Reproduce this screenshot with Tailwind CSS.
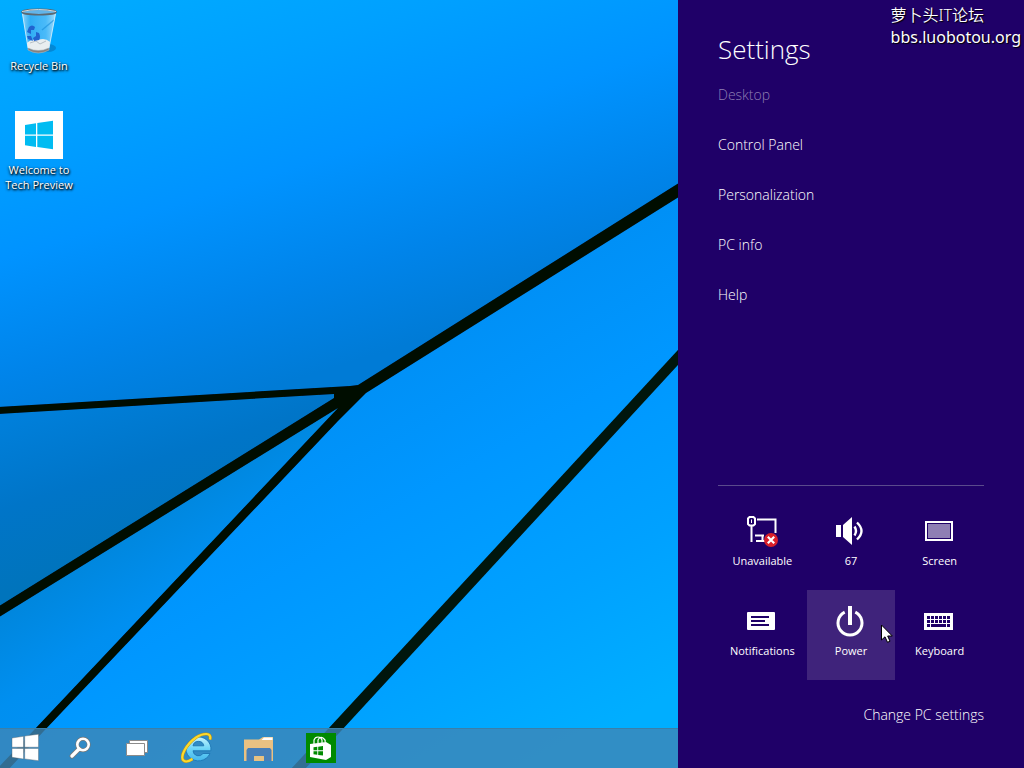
<!DOCTYPE html>
<html lang="en">
<head>
<meta charset="utf-8">
<meta name="viewport" content="width=device-width, initial-scale=1">
<title>Settings</title>
<script src="https://cdn.jsdelivr.net/npm/@tailwindcss/browser@4"></script>
</head>
<body class="relative flex h-screen overflow-hidden bg-[#1f0068] font-['Open_Sans','Noto_Sans','Noto_Sans_CJK_SC',sans-serif] text-white">

<main class="relative isolate flex min-w-0 flex-1 flex-col overflow-hidden">
  <!-- Wallpaper -->
  <svg class="absolute inset-0 -z-10 h-full w-full" viewBox="0 0 678 768" preserveAspectRatio="xMinYMin slice" aria-hidden="true">
    <defs>
      <linearGradient id="sky" gradientUnits="userSpaceOnUse" x1="0" y1="0" x2="135" y2="430">
        <stop offset="0" stop-color="#00adff"/><stop offset=".3" stop-color="#00a0ff"/><stop offset=".55" stop-color="#0093ff"/><stop offset=".8" stop-color="#0084ea"/><stop offset="1" stop-color="#007bd6"/>
      </linearGradient>
      <linearGradient id="wedge" gradientUnits="userSpaceOnUse" x1="60" y1="405" x2="110" y2="560">
        <stop offset="0" stop-color="#007fda"/><stop offset=".5" stop-color="#0075c8"/><stop offset="1" stop-color="#0074bc"/>
      </linearGradient>
      <linearGradient id="sliver" gradientUnits="userSpaceOnUse" x1="60" y1="570" x2="150" y2="700">
        <stop offset="0" stop-color="#0086dc"/><stop offset=".5" stop-color="#008ff0"/><stop offset="1" stop-color="#0092f6"/>
      </linearGradient>
      <linearGradient id="field" gradientUnits="userSpaceOnUse" x1="330" y1="400" x2="540" y2="768">
        <stop offset="0" stop-color="#0090f6"/><stop offset=".3" stop-color="#0097ff"/><stop offset=".65" stop-color="#00a1ff"/><stop offset="1" stop-color="#00aeff"/>
      </linearGradient>
      <filter id="edge" x="-5%" y="-5%" width="110%" height="110%"><feGaussianBlur stdDeviation=".6"/></filter>
    </defs>
    <rect width="678" height="768" fill="url(#field)"/>
    <path d="M0 0H678V190L355 390L0 411Z" fill="url(#sky)"/>
    <path d="M0 411L355 390L0 612Z" fill="url(#wedge)"/>
    <path d="M0 612L355 390L5 768H0Z" fill="url(#sliver)"/>
    <g filter="url(#edge)">
      <path d="M-4 407L350 386L358 385L690 176V190L366 393L338 421L43 732L8 770H-4L34 730L338 408L-4 619V608L334 398L334 394L-4 414Z" fill="#010806"/>
      <path d="M690 337L328 729L290 770H304L341 731L690 352Z" fill="#03140c"/>
    </g>
  </svg>

  <ul class="flex w-[78px] flex-1 flex-col gap-[38px] pt-[7px] text-center text-[11px] leading-[15px] font-[450] [text-shadow:1px_1px_2px_#000,0_1px_3px_#000]">
    <li>
      <a href="#recycle" class="flex flex-col items-center gap-[3px]">
        <svg class="size-12" viewBox="0 0 48 48" aria-hidden="true">
          <defs><linearGradient id="glass"><stop offset="0" stop-color="#b9e2f8" stop-opacity=".8"/><stop offset=".25" stop-color="#4ab0f0" stop-opacity=".65"/><stop offset=".7" stop-color="#7cc6f5" stop-opacity=".6"/><stop offset="1" stop-color="#c4e8fa" stop-opacity=".85"/></linearGradient></defs>
          <ellipse cx="33" cy="41" rx="8" ry="4" fill="#075b98" opacity=".4"/>
          <path d="M7 5L13 41Q23 48 34 41L41 5Z" fill="url(#glass)"/>
          <path d="M12 36Q17 31 23 33Q30 30 35 35L34 41Q23 46 13 41Z" fill="#e9eef0"/>
          <path d="M15 36L21 34L25 37L31 34" fill="none" stroke="#b7c0c6" stroke-width="1"/>
          <path d="M13 41Q23 46 34 41V43Q23 49 13 43Z" fill="#84817f" stroke="#b8b6b4" stroke-width=".6"/>
          <path d="M14 20Q17 17 20 20L19 23L16 23L16 27L12 25ZM21 25L24 26Q26 30 24 33L19 34L18 31L21 29ZM12 29L16 29L18 34L13 32Z" fill="#2163cf"/>
          <path d="M27 23L39 13" stroke="#178ddb" stroke-width="1.5" opacity=".6"/>
          <ellipse cx="24" cy="5" rx="17" ry="2.700" fill="#62b4e8" stroke="#5d6972" stroke-width="1.600"/>
          <path d="M7 4.500Q23 .5 41 4.500" fill="none" stroke="#d4dadd"/>
          <path d="M7.500 7L13 41M40.500 7L34 41" stroke="#dff3fc" stroke-width=".8"/>
        </svg>
        <span>Recycle Bin</span>
      </a>
    </li>
    <li>
      <a href="#welcome" class="flex flex-col items-center gap-[3px]">
        <svg class="size-12 bg-white" viewBox="0 0 48 48" fill="#00bcf2" aria-hidden="true"><path d="M10 14L21 12.300V23.500H10ZM22.300 12.100L38 9.800V23.500H22.300ZM10 24.800H21V36L10 34.300ZM22.300 24.800H38V38.300L22.300 36.100Z"/></svg>
        <span>Welcome to<br>Tech Preview</span>
      </a>
    </li>
  </ul>

  <nav aria-label="Taskbar" class="flex h-10 items-center bg-[#3d86b6]/80 shadow-[inset_0_1px_0_#3b7fa8]">
    <button aria-label="Start" class="flex w-[50px] justify-center">
      <svg class="size-8" viewBox="0 0 32 32" fill="#fff" stroke="#54606a" stroke-width=".4" aria-hidden="true"><path d="M3 6L14.500 4.300V15.200H3ZM15.700 4.100L29.500 2.200V15.200H15.700ZM3 16.400H14.500V27L3 25.300ZM15.700 16.400H29.500V28.700L15.700 26.900Z"/></svg>
    </button>
    <button aria-label="Search" class="flex w-[60px] justify-center">
      <svg class="size-6" viewBox="0 0 24 24" fill="none" aria-hidden="true"><circle cx="15" cy="8.500" r="5.700" stroke="#777" stroke-width="4"/><path d="M11 13L4 20" stroke="#777" stroke-width="5" stroke-linecap="round"/><circle cx="15" cy="8.500" r="5.700" stroke="#fff" stroke-width="2.600"/><path d="M11 13L4 20" stroke="#fff" stroke-width="3.400" stroke-linecap="round"/></svg>
    </button>
    <button aria-label="Task view" class="flex w-[54px] justify-center">
      <svg class="size-6" viewBox="0 0 24 24" fill="#fff" stroke="#8b8b8b" aria-hidden="true"><path d="M4.500 4.500H22.500V16.500H4.500Z"/><path d="M1.500 7.500H19.500V19.500H1.500Z"/></svg>
    </button>
    <button aria-label="Internet Explorer" class="flex w-[66px] justify-center">
      <svg class="size-8" viewBox="0 0 32 32" fill="none" aria-hidden="true">
        <defs><linearGradient id="ie" x2="0" y2="1"><stop stop-color="#c4f3fd"/><stop offset=".5" stop-color="#6cd5f8"/><stop offset="1" stop-color="#43b6ec"/></linearGradient></defs>
        <path d="M29.800 18.800H12A5.500 5.500 0 0 0 22 21.500H29A12.500 12 0 1 1 29.800 18.800ZM12 13.800A5.500 5.500 0 0 1 22.800 13.800Z" fill="url(#ie)" fill-rule="evenodd" stroke="#1d76b4" stroke-width=".9"/>
        <path d="M29 7.500C31 0 22 1 15 5.500C5 12.500-1.500 25 2.600 28.500C4.800 30.500 8.500 29 11.500 27" stroke="#b8901a" stroke-width="3.200"/>
        <path d="M29 7.500C31 0 22 1 15 5.500C5 12.500-1.500 25 2.600 28.500C4.800 30.500 8.500 29 11.500 27" stroke="#fbd92c" stroke-width="2.200"/>
      </svg>
    </button>
    <button aria-label="File Explorer" class="flex w-[58px] justify-center">
      <svg class="size-8" viewBox="0 0 32 32" aria-hidden="true"><path d="M1 7.500H16L20 5H30V29H26V27H5V29H1Z" fill="#e9c182"/><path d="M18.500 8L21 5.500H29.500V8Z" fill="#fff"/><path d="M3.500 29V18L5 16H27L28.500 18V29H21V25Q21 24 20 24H12Q11 24 11 25V29Z" fill="#477fb9"/><path d="M11 29V25Q11 24 12 24H20Q21 24 21 25V29Z" fill="#e9c182"/></svg>
    </button>
    <button aria-label="Store" class="flex w-[66px] justify-center">
      <svg class="size-[30px] bg-[#008a00]" viewBox="0 0 30 30" fill="none" aria-hidden="true"><path d="M4 11L20 9L25 12V24L20 27L4 24Z" fill="#fff"/><path d="M8 11V7Q9 4 12 4T16 7V10M12 10V7Q14 3 17 5T19 9" stroke="#fff" stroke-width="1.200"/><path d="M7.500 14.300L11.300 13.800V17.300H7.500ZM12.200 13.700L17 13V17.300H12.200ZM7.500 18.200H11.300V21.800L7.500 21.300ZM12.200 18.200H17V22.600L12.200 21.900Z" fill="#008a00"/></svg>
    </button>
  </nav>
</main>

<aside class="flex w-[346px] shrink-0 flex-col bg-[#1f0068] px-10 pt-7 pb-[43px]">
  <h1 class="text-[26px] leading-[42px] font-[350]">Settings</h1>
  <h2 class="flex h-[50px] items-center text-sm font-[350] text-[#8f7fb3]">Desktop</h2>
  <nav aria-label="Settings" class="flex flex-col text-sm font-[350]">
    <a href="#control" class="flex h-[50px] items-center">Control Panel</a>
    <a href="#personalization" class="flex h-[50px] items-center">Personalization</a>
    <a href="#info" class="flex h-[50px] items-center">PC info</a>
    <a href="#help" class="flex h-[50px] items-center">Help</a>
  </nav>

  <div class="mt-auto grid grid-cols-3 border-t border-[#5a4a8c] pt-[14px] text-[11px] leading-4">
    <button class="flex h-[90px] flex-col items-center gap-[6px] pt-[15px]">
      <svg class="size-8" viewBox="0 0 32 32" fill="none" aria-hidden="true">
        <path d="M2 3.500L3.500 2H7.500L9 3.500V9L7.500 10.500H3.500L2 9ZM5.500 11V27M11 4.500H29.500V18M9 20.500H18M16.500 20V25M10 26H19" stroke="#fff" stroke-width="2"/><path d="M5.500 4.500V8" stroke="#fff"/>
        <circle cx="25" cy="25" r="7" fill="#d9202a"/><path d="M21.800 21.800L28.200 28.200M28.200 21.800L21.800 28.200" stroke="#fff" stroke-width="2.200"/>
      </svg>
      <span>Unavailable</span>
    </button>
    <button class="flex h-[90px] flex-col items-center gap-[6px] pt-[15px]">
      <svg class="size-8" viewBox="0 0 32 32" fill="#fff" aria-hidden="true"><path d="M1 10H6V22H1ZM8 10L17 2V30L8 22Z"/><path d="M19.500 11.500Q22.500 16 19.500 20.500M22 7.500Q31 16 22 24.500" fill="none" stroke="#fff" stroke-width="2.400"/></svg>
      <span>67</span>
    </button>
    <button class="flex h-[90px] flex-col items-center gap-[6px] pt-[15px]">
      <svg class="size-8" viewBox="0 0 32 32" aria-hidden="true"><path d="M2 7H28V25H2Z" fill="none" stroke="#fff" stroke-width="2"/><path d="M4 9H26V23H4Z" fill="#8f7fb4"/><path d="M3.500 8.500H26.500V23.500H3.500Z" fill="none" stroke="#1f0068"/></svg>
      <span>Screen</span>
    </button>
    <button class="flex h-[90px] flex-col items-center gap-[6px] pt-[15px]">
      <svg class="size-8" viewBox="0 0 32 32" aria-hidden="true"><rect x="1" y="7" width="28" height="18" rx="1" fill="#fff"/><path d="M5 12H23M5 16H19M5 20H23" stroke="#1f0068" stroke-width="2"/></svg>
      <span>Notifications</span>
    </button>
    <button class="relative flex h-[90px] flex-col items-center gap-[6px] bg-[#3f237b] pt-[15px]">
      <svg class="size-8" viewBox="0 0 32 32" fill="none" stroke="#fff" aria-hidden="true"><path d="M15 1V20" stroke-width="4"/><path d="M9.700 7.200A12 12 0 1 0 20.300 7.200" stroke-width="3"/></svg>
      <span>Power</span>
      <svg class="absolute top-[34px] left-[74px] h-5 w-3" viewBox="0 0 12 20" aria-hidden="true"><path d="M.5 1V16L4 12.800L6.500 18.300L9 17.200L6.700 12H11.300Z" fill="#fff" stroke="#000"/></svg>
    </button>
    <button class="flex h-[90px] flex-col items-center gap-[6px] pt-[15px]">
      <svg class="size-8" viewBox="0 0 32 32" aria-hidden="true"><path d="M0 8H29V25H0Z" fill="#fff"/><path d="M3 11H6V14H3ZM7 11H10V14H7ZM11 11H14V14H11ZM15 11H18V14H15ZM19 11H22V14H19ZM23 11H26V14H23ZM3 15H6V18H3ZM7 15H10V18H7ZM11 15H14V18H11ZM15 15H18V18H15ZM19 15H22V18H19ZM23 15H26V18H23ZM3 19H6V22H3ZM7 19H22V22H7ZM23 19H26V22H23Z" fill="#1f0068"/></svg>
      <span>Keyboard</span>
    </button>
  </div>

  <a href="#pc-settings" class="mt-[25px] self-end text-sm leading-5 font-[350]">Change PC settings</a>
</aside>

<div class="absolute top-1 right-[3px] font-['Noto_Sans','Noto_Sans_CJK_SC',sans-serif] text-base leading-[22px] [text-shadow:1px_1px_1px_#000]">
  <p class="font-[350]">萝卜头IT论坛</p>
  <p>bbs.luobotou.org</p>
</div>

</body>
</html>
